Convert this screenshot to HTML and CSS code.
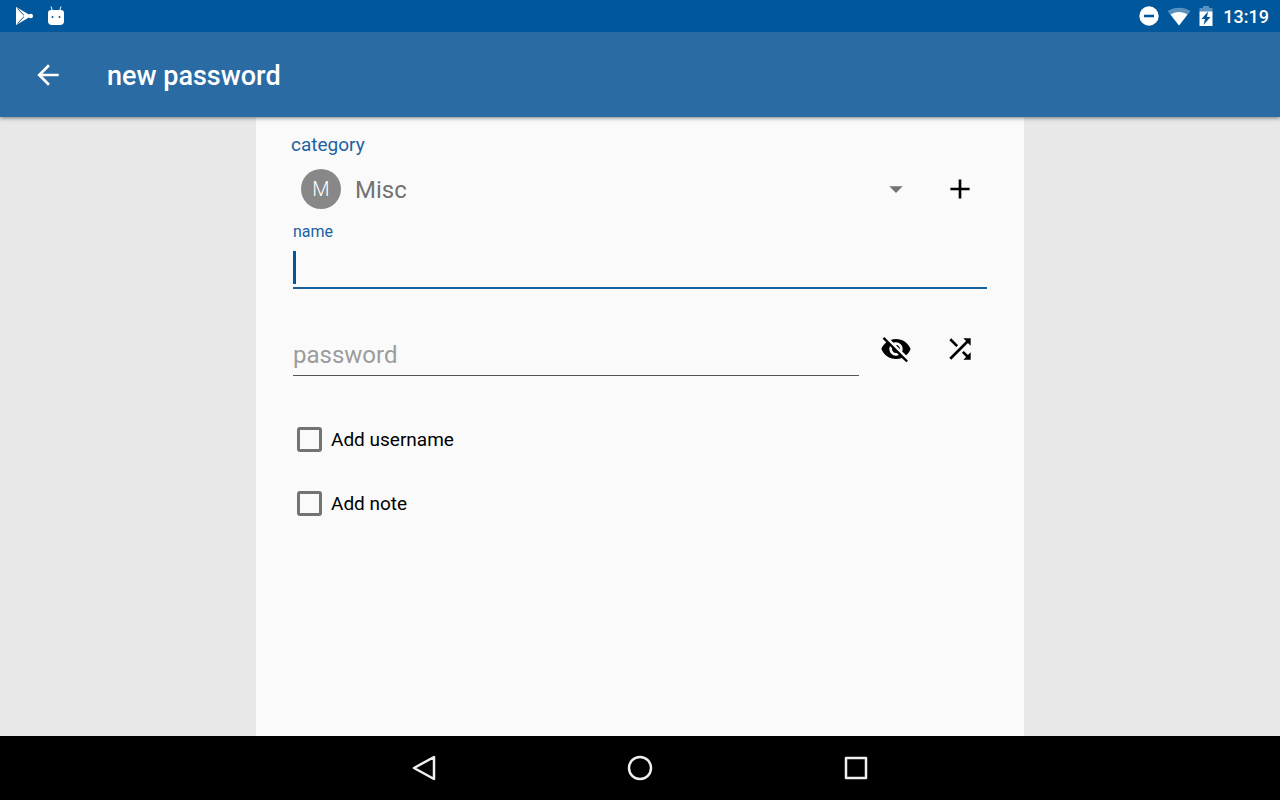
FILE: index.html
```html
<!DOCTYPE html>
<html lang="en">
<head>
    <meta charset="UTF-8">
    <meta name="viewport" content="width=device-width, initial-scale=1.0">
    <title>new password</title>
    <link rel="stylesheet" href="styles.css">
</head>

<body>
    <!-- Status bar -->
    <div class="status-bar">
        <div class="status-left">
            <svg width="20" height="20" viewBox="0 0 20 20" fill="#fff">
                <path d="M2 1v18L17.500 10z"/>
                <path d="M3.500 2.500l9 9.500M3.500 17.500l9-9.500" stroke="#01579b" stroke-width="1" fill="none"/>
                <path d="M12 7l3.500 3-3.500 3-2.500-3z"/>
                <circle cx="16.800" cy="10" r="2.200"/>
            </svg>
            <svg width="20" height="20" viewBox="0 0 20 20" fill="#fff">
                <path d="M5 .5l1.500 4.500M15 .5L13.500 5" stroke="#fff" stroke-width="1"/>
                <path d="M5 4h10a3 3 0 0 1 3 3v8a4 4 0 0 1-4 4H6a4 4 0 0 1-4-4V7a3 3 0 0 1 3-3z"/>
                <circle cx="6.500" cy="11" r="1" fill="#01579b"/>
                <circle cx="13.500" cy="11" r="1" fill="#01579b"/>
            </svg>
        </div>
        <div class="status-right">
            <svg width="20" height="20" viewBox="0 0 20 20">
                <circle cx="10" cy="10" r="9.700" fill="#fff"/>
                <path d="M5 8.700h10v2.600H5z" fill="#01579b"/>
            </svg>
            <svg width="24" height="20" viewBox="0 0 24 20" fill="#fff">
                <path d="M12 19.500L.5 5C7 .5 17 .5 23.500 5z" opacity="0.350"/>
                <path d="M12 19.500L3.500 8.500C8.500 5 15.500 5 20.500 8.500z"/>
            </svg>
            <svg width="14" height="20" viewBox="0 0 14 20" fill="#fff">
                <path d="M4 0h6v2h3.500v4H.5V2H4z" opacity="0.350"/>
                <path d="M.5 5.500h13V20H.5z"/>
                <path d="M9 5.500l-6.500 7.500H6l-1.500 6L11.500 11H8z" fill="#01579b"/>
            </svg>
            <span class="clock">13:19</span>
        </div>
    </div>

    <!-- App bar -->
    <header class="app-bar">
        <button class="icon-btn back-btn" type="button" aria-label="Back">
            <svg width="32" height="32" viewBox="0 0 24 24" fill="#fff"><path d="M20 11H7.830l5.590-5.590L12 4l-8 8 8 8 1.410-1.410L7.830 13H20v-2z"/></svg>
        </button>
        <h1>new password</h1>
    </header>

    <main class="content">
        <form class="card">
            <label class="category-label" for="category">category</label>
            <div class="row">
                <div class="category">
                    <span class="avatar">M</span>
                    <select id="category">
                        <option>Misc</option>
                    </select>
                    <svg class="arrow" width="32" height="32" viewBox="0 0 24 24" fill="#737373"><path d="M7 10l5 5 5-5z"/></svg>
                </div>
                <button class="icon-btn" type="button" aria-label="Add category">
                    <svg width="32" height="32" viewBox="0 0 24 24"><path d="M19.200 13h-6.200v6.200h-2V13H4.800v-2H11V4.800h2V11h6.200z"/></svg>
                </button>
            </div>

            <div class="field name-field">
                <label for="name">name</label>
                <input type="text" id="name">
                <span class="cursor"></span>
            </div>

            <div class="row password-row">
                <div class="field">
                    <input type="password" id="password" placeholder="password" aria-label="password">
                </div>
                <button class="icon-btn" type="button" aria-label="Show password">
                    <svg width="32" height="32" viewBox="0 0 24 24"><path d="M12 7c2.760 0 5 2.240 5 5 0 .65-.13 1.260-.36 1.830l2.920 2.920c1.510-1.260 2.700-2.890 3.430-4.750-1.730-4.390-6-7.500-11-7.500-1.400 0-2.740.25-3.980.7l2.160 2.160C10.740 7.130 11.350 7 12 7zM2 4.270l2.280 2.280.46.46C3.080 8.300 1.780 10.020 1 12c1.730 4.390 6 7.500 11 7.500 1.550 0 3.030-.3 4.380-.84l.42.42L19.730 22 21 20.730 3.270 3 2 4.270zM7.530 9.800l1.550 1.550c-.05.21-.08.43-.08.65 0 1.660 1.340 3 3 3 .22 0 .44-.03.65-.08l1.550 1.550c-.67.33-1.410.53-2.200.53-2.760 0-5-2.240-5-5 0-.79.2-1.530.53-2.200zm4.310-.78l3.150 3.150.02-.16c0-1.660-1.340-3-3-3l-.17.01z"/></svg>
                </button>
                <button class="icon-btn" type="button" aria-label="Generate password">
                    <svg width="32" height="32" viewBox="0 0 24 24"><path d="M10.590 9.170L5.410 4 4 5.410l5.170 5.170 1.420-1.410zM14.500 4l2.040 2.040L4 18.590 5.410 20 17.960 7.460 20 9.500V4h-5.500zm.33 9.410l-1.410 1.410 3.130 3.130L14.500 20H20v-5.500l-2.040 2.040-3.130-3.130z"/></svg>
                </button>
            </div>

            <div class="checks">
                <label class="check"><input type="checkbox" id="add-username">Add username</label>
                <label class="check"><input type="checkbox" id="add-note">Add note</label>
            </div>
        </form>
    </main>

    <!-- Navigation bar -->
    <nav class="nav-bar">
        <button type="button" aria-label="Back">
            <svg width="32" height="32" viewBox="0 0 32 32" stroke-width="2.500"><path d="M26 5v22L6 16z"/></svg>
        </button>
        <button type="button" aria-label="Home">
            <svg width="32" height="32" viewBox="0 0 32 32" stroke-width="2.500"><circle cx="16" cy="16" r="11"/></svg>
        </button>
        <button type="button" aria-label="Recent apps">
            <svg width="32" height="32" viewBox="0 0 32 32" stroke-width="2.500"><path d="M6 6h20v20H6z"/></svg>
        </button>
    </nav>
</body>
</html>
```

FILE: styles.css
```css
* {
    box-sizing: border-box;
}
body {
    font-family: Roboto, sans-serif;
    background-color: #e8e8e8;
    margin: 0;
    min-height: 100vh;
    display: flex;
    flex-direction: column;
}
svg {
    display: block;
}
button {
    border: none;
    background: none;
    padding: 0;
    cursor: pointer;
}

/* Status bar */
.status-bar {
    height: 32px;
    background-color: #01579b;
    color: #fff;
    display: flex;
    justify-content: space-between;
    align-items: center;
    padding: 0 11px 0 14px;
    position: relative;
    z-index: 2;
}
.status-left {
    display: flex;
    gap: 12px;
}
.status-right {
    display: flex;
    align-items: center;
    gap: 8px;
}
.clock {
    font-size: 18px;
    font-weight: 500;
    line-height: 30px;
    padding: 2px 0 0 2px;
}

/* App bar */
.app-bar {
    height: 85px;
    background-color: #2b6ba3;
    color: #fff;
    display: flex;
    align-items: center;
    padding: 0 16px;
    box-shadow: 0 1px 4px rgba(0, 0, 0, 0.5);
    position: relative;
    z-index: 1;
}
.app-bar h1 {
    font-size: 27px;
    font-weight: 500;
    line-height: 32px;
    padding-top: 2px;
    margin: 0 0 0 27px;
}
.icon-btn {
    width: 64px;
    height: 64px;
    flex: none;
    display: flex;
    justify-content: center;
    align-items: center;
}

/* Form */
.content {
    flex: 1;
    display: flex;
    justify-content: center;
}
.card {
    width: 60%;
    background-color: #fafafa;
    padding: 16px 32px;
}
.category-label {
    display: block;
    font-size: 19px;
    line-height: 24px;
    padding-left: 3px;
    color: #1b62a2;
}
.row {
    display: flex;
    align-items: flex-end;
}
.category {
    flex: 1;
    height: 64px;
    display: flex;
    align-items: center;
    position: relative;
    padding-left: 13px;
}
.avatar {
    width: 40px;
    height: 40px;
    border-radius: 50%;
    background-color: #888;
    color: #fff;
    font-size: 20px;
    font-weight: 300;
    line-height: 40px;
    text-align: center;
}
.category select {
    appearance: none;
    flex: 1;
    height: 64px;
    border: none;
    outline: none;
    background: none;
    color: #737373;
    font-family: inherit;
    font-size: 24px;
    padding: 2px 0 0 14px;
}
.arrow {
    position: absolute;
    right: 16px;
    top: 16px;
    pointer-events: none;
}
.field {
    flex: 1;
    margin: 0 5px;
    position: relative;
}
.field label {
    display: block;
    font-size: 16px;
    line-height: 20px;
    color: #1b62a2;
}
.field input {
    display: block;
    width: 100%;
    height: 44px;
    border: none;
    border-bottom: 1px solid #555;
    border-radius: 0;
    outline: none;
    background: none;
    padding: 2px 0 0;
    font-family: inherit;
    font-size: 24px;
    color: #222;
}
.field input::placeholder {
    color: #9c9c9c;
    opacity: 1;
}
.name-field {
    margin-top: 1px;
}
.name-field input {
    height: 47px;
    border-bottom: 2px solid #155f9c;
}
.cursor {
    position: absolute;
    left: 0;
    bottom: 5px;
    width: 3px;
    height: 33px;
    background-color: #01579b;
}
.password-row {
    margin-top: 28px;
}
.password-row .field {
    margin-bottom: 5px;
}
.checks {
    margin-top: 26px;
}
.check {
    display: flex;
    align-items: center;
    height: 64px;
    padding-left: 9px;
    font-size: 19px;
    color: #000;
}
.check input {
    appearance: none;
    width: 25px;
    height: 25px;
    margin: 0 9px 0 0;
    border: 3px solid #737373;
    border-radius: 3px;
}
.check input:checked {
    background-color: #01579b;
    border-color: #01579b;
}

/* Navigation bar */
.nav-bar {
    height: 64px;
    background-color: #000;
    display: flex;
    justify-content: center;
    gap: 120px;
}
.nav-bar button {
    width: 96px;
    display: flex;
    justify-content: center;
    align-items: center;
}
.nav-bar svg {
    fill: none;
    stroke: #f0f0f0;
    stroke-linejoin: round;
}
```
